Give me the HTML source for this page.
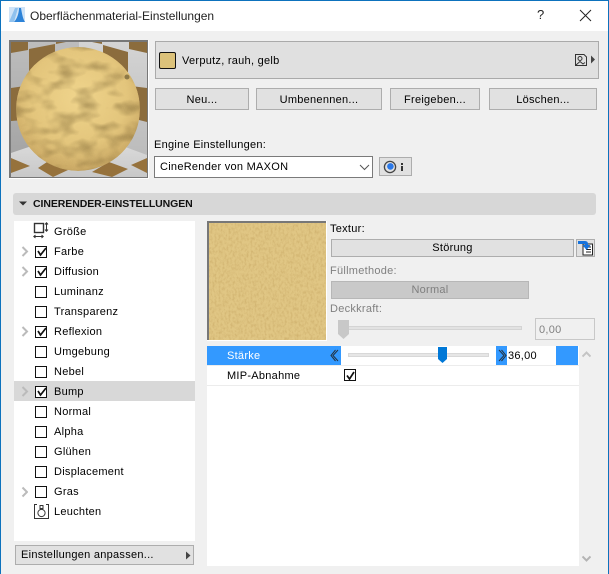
<!DOCTYPE html>
<html lang="de"><head><meta charset="utf-8"><title>Oberflächenmaterial-Einstellungen</title>
<style>
html,body{margin:0;padding:0;background:#f0f0f0}
#w{position:relative;width:609px;height:574px;overflow:hidden;background:#f0f0f0;font-family:"Liberation Sans",sans-serif;font-size:11px;color:#000;letter-spacing:.27px}
#w div,#w svg{position:absolute;box-sizing:border-box}
.t{white-space:nowrap;line-height:14px;margin-top:1px}
.b{background:#e1e1e1;border:1px solid #adadad;text-align:center;white-space:nowrap;line-height:22px}
.c{width:12px;height:12px;border:1px solid #111;background:#fff;margin-top:1px}
</style></head><body><div id="w">
<div style="left:0;top:0;width:609px;height:31px;background:#fff"></div>
<div style="left:0;top:0;width:609px;height:1px;background:#0d72bd"></div>
<div style="left:0;top:0;width:1px;height:574px;background:#0d72bd"></div>
<div style="left:608px;top:0;width:1px;height:574px;background:#0d72bd"></div>
<svg style="left:9px;top:7px" width="17" height="16" viewBox="0 0 17 16"><rect width="16" height="15" fill="#cfe3f7"/><path d="M0 15 L6 1 H9 L5 15Z" fill="#8fc1ee"/><path d="M5 15 C8 12 10 6 10 1 H12 C13 7 14 12 16 15Z" fill="#2d83d8"/></svg>
<div class="t" style="left:30px;top:8px;font-size:12px;letter-spacing:0;color:#222">Oberflächenmaterial-Einstellungen</div>
<div class="t" style="left:537px;top:7px;font-size:13px;color:#222">?</div>
<svg style="left:579px;top:9px" width="13" height="13"><path d="M1 1 L12 12 M12 1 L1 12" stroke="#222" stroke-width="1" fill="none"/></svg>

<svg style="left:9px;top:40px" width="140" height="139" viewBox="0 0 140 139">
<defs>
<filter id="n" x="0" y="0" width="100%" height="100%" color-interpolation-filters="sRGB"><feTurbulence type="fractalNoise" baseFrequency=".045 .095" numOctaves="3" seed="12"/><feGaussianBlur stdDeviation="1.2"/><feColorMatrix values="0 0 0 0 .48  0 0 0 0 .39  0 0 0 0 .2  0 2.6 0 0 -1.15"/></filter>
<filter id="g" x="0" y="0" width="100%" height="100%" color-interpolation-filters="sRGB"><feTurbulence type="fractalNoise" baseFrequency=".9" numOctaves="2" seed="3"/><feColorMatrix values="0 0 0 0 1  0 0 0 0 .88  0 0 0 0 .55  .8 0 0 0 -.3"/></filter>
<radialGradient id="sp" cx=".5" cy=".4" r=".66"><stop offset="0" stop-color="#efd48c"/><stop offset=".6" stop-color="#e3c57c"/><stop offset=".88" stop-color="#cbaa66"/><stop offset="1" stop-color="#a68b56"/></radialGradient>
<linearGradient id="lw" x1="0" y1="0" x2="0" y2="1"><stop offset="0" stop-color="#bdbdbd"/><stop offset="1" stop-color="#a3a3a3"/></linearGradient>
<linearGradient id="rw" x1="0" y1="0" x2="0" y2="1"><stop offset="0" stop-color="#d4d4d4"/><stop offset="1" stop-color="#bababa"/></linearGradient>
<linearGradient id="fl" x1="0" y1="0" x2="0" y2="1"><stop offset="0" stop-color="#e2e2e2"/><stop offset="1" stop-color="#c8c8c8"/></linearGradient>
<clipPath id="cp"><circle cx="69" cy="69" r="62"/></clipPath>
</defs>
<rect width="140" height="139" fill="#fff"/>
<rect x="0" y="0" width="139" height="138" fill="#777"/>
<rect x="2" y="2" width="68" height="120" fill="url(#lw)"/>
<rect x="70" y="2" width="68" height="120" fill="url(#rw)"/>
<path d="M2 113 L70 90 L138 115 V137 H2Z" fill="url(#fl)"/>
<path d="M2 2H19V10L2 13ZM20 9L46 4V30L20 36ZM47 2H57L47 4ZM83 2H93V4ZM94 5L119 12V32L94 30ZM120 2H138V13L120 9ZM2 48L16 46V80L2 81ZM122 46L138 48V82L122 78Z" fill="#8b6c3d"/>
<path d="M2 118L21 126L2 133ZM29 128L44 118L59 130L44 137ZM83 132L100 122L119 129L103 137ZM122 125L138 118V133Z" fill="#96723c"/>
<g clip-path="url(#cp)"><circle cx="69" cy="69" r="62" fill="url(#sp)"/>
<rect x="5" y="5" width="128" height="128" filter="url(#n)" opacity=".5"/>
<rect x="5" y="5" width="128" height="128" filter="url(#g)" opacity=".2"/>
<circle cx="118" cy="37" r="2.5" fill="#5a4d2a" opacity=".6"/></g>
</svg>

<div style="left:155px;top:41px;width:444px;height:38px;background:#e0e0e0;border:1px solid #aaa"></div>
<div style="left:159px;top:52px;width:17px;height:17px;background:#dcc27a;border:1px solid #111;border-radius:2px"></div>
<div class="t" style="left:182px;top:53px">Verputz, rauh, gelb</div>
<svg style="left:574px;top:53px" width="22" height="14" viewBox="0 0 22 14"><path d="M1.5 1.5H10L12.5 4V12.5H1.5Z" fill="none" stroke="#333"/><circle cx="6" cy="5.5" r="2" fill="none" stroke="#333"/><path d="M2 12L6 8.5L9 11L11 9.5" fill="none" stroke="#333"/><path d="M17 2.5L21 6.5L17 10.5Z" fill="#444"/></svg>

<div class="b" style="left:155px;top:88px;width:94px;height:22px">Neu...</div>
<div class="b" style="left:256px;top:88px;width:126px;height:22px">Umbenennen...</div>
<div class="b" style="left:390px;top:88px;width:90px;height:22px">Freigeben...</div>
<div class="b" style="left:489px;top:88px;width:108px;height:22px">Löschen...</div>

<div class="t" style="left:154px;top:137px">Engine Einstellungen:</div>
<div style="left:154px;top:156px;width:219px;height:22px;background:#fff;border:1px solid #7a7a7a"></div>
<div class="t" style="left:160px;top:159px">CineRender von MAXON</div>
<svg style="left:359px;top:164px" width="11" height="7"><path d="M1 1L5.5 5.5L10 1" fill="none" stroke="#555"/></svg>
<div style="left:379px;top:157px;width:33px;height:19px;background:#e1e1e1;border:1px solid #adadad"></div>
<svg style="left:383px;top:160px" width="26" height="14"><circle cx="7" cy="7" r="5.6" fill="none" stroke="#444" stroke-width="1.3"/><circle cx="7.4" cy="6.4" r="3.3" fill="#2a78e8"/><rect x="18" y="6" width="2" height="5" fill="#333"/><rect x="18" y="3" width="2" height="2" fill="#333"/></svg>

<div style="left:13px;top:193px;width:583px;height:22px;background:#d7d7d7;border-radius:3px"></div>
<svg style="left:18px;top:200px" width="10" height="7"><path d="M1 1.5H9L5 5.5Z" fill="#333"/></svg>
<div class="t" style="left:33px;top:196px;font-weight:bold;font-size:10.5px;letter-spacing:-.08px;color:#111">CINERENDER-EINSTELLUNGEN</div>

<div style="left:14px;top:221px;width:181px;height:320px;background:#fff"></div>
<div style="left:14px;top:381px;width:181px;height:20px;background:#d8d8d8"></div>
<div style="left:198px;top:221px;width:400px;height:345px;background:#f0f0f0"></div>

<svg style="left:33px;top:222px" width="16" height="18" viewBox="0 0 16 18"><rect x="1.5" y="1.5" width="9" height="9" fill="none" stroke="#333" stroke-width="1.4"/><path d="M13.5 1V9M12 2.5L13.5 .8L15 2.5M12 7.5L13.5 9.2L15 7.5M1 14.5H10M2.5 13L.8 14.5L2.5 16M8.5 13L10.2 14.5L8.5 16" fill="none" stroke="#333"/></svg>
<div class="t" style="left:54px;top:224px">Größe</div>

<div class="c" style="left:35px;top:245px"></div><div class="c" style="left:35px;top:265px"></div><div class="c" style="left:35px;top:285px"></div><div class="c" style="left:35px;top:305px"></div><div class="c" style="left:35px;top:325px"></div><div class="c" style="left:35px;top:345px"></div><div class="c" style="left:35px;top:365px"></div><div class="c" style="left:35px;top:385px"></div><div class="c" style="left:35px;top:405px"></div><div class="c" style="left:35px;top:425px"></div><div class="c" style="left:35px;top:445px"></div><div class="c" style="left:35px;top:465px"></div><div class="c" style="left:35px;top:485px"></div>

<svg style="left:20px;top:222px" width="30" height="200" viewBox="0 0 30 200">
<g fill="none" stroke="#bbb" stroke-width="2"><path d="M2.5 25L7 29.5L2.5 34M2.5 45L7 49.5L2.5 54M2.5 105L7 109.5L2.5 114M2.5 165L7 169.5L2.5 174"/></g>
<g fill="none" stroke="#111" stroke-width="1.7"><path d="M18 29L20.5 33L26 26M18 49L20.5 53L26 46M18 109L20.5 113L26 106M18 169L20.5 173L26 166"/></g>
</svg>
<svg style="left:20px;top:486px" width="8" height="12"><path d="M2.5 1.5L7 6L2.5 10.5" fill="none" stroke="#bbb" stroke-width="2"/></svg>

<div class="t" style="left:54px;top:244px">Farbe</div>
<div class="t" style="left:54px;top:264px">Diffusion</div>
<div class="t" style="left:54px;top:284px">Luminanz</div>
<div class="t" style="left:54px;top:304px">Transparenz</div>
<div class="t" style="left:54px;top:324px">Reflexion</div>
<div class="t" style="left:54px;top:344px">Umgebung</div>
<div class="t" style="left:54px;top:364px">Nebel</div>
<div class="t" style="left:54px;top:384px">Bump</div>
<div class="t" style="left:54px;top:404px">Normal</div>
<div class="t" style="left:54px;top:424px">Alpha</div>
<div class="t" style="left:54px;top:444px">Glühen</div>
<div class="t" style="left:54px;top:464px">Displacement</div>
<div class="t" style="left:54px;top:484px">Gras</div>
<div class="t" style="left:54px;top:504px">Leuchten</div>
<svg style="left:34px;top:504px" width="15" height="15" viewBox="0 0 15 15"><path d="M3 .5H.5V14.5H14.5V.5H12" fill="none" stroke="#333"/><circle cx="7.5" cy="9" r="3.6" fill="none" stroke="#333"/><rect x="6" y="1.5" width="3" height="3" fill="none" stroke="#333"/></svg>

<div style="left:15px;top:545px;width:179px;height:20px;background:#e1e1e1;border:1px solid #adadad"></div>
<div class="t" style="left:21px;top:547px">Einstellungen anpassen...</div>
<svg style="left:185px;top:551px" width="7" height="9"><path d="M1 .5L5.5 4.5L1 8.5Z" fill="#444"/></svg>

<svg style="left:207px;top:221px" width="120" height="120" viewBox="0 0 120 120">
<defs><filter id="tx" x="0" y="0" width="100%" height="100%" color-interpolation-filters="sRGB"><feTurbulence type="fractalNoise" baseFrequency=".5 .3" numOctaves="3" seed="5"/><feColorMatrix values="0 0 0 0 .68  0 0 0 0 .53  0 0 0 0 .26  0 2.2 0 0 -.9"/></filter></defs>
<rect width="120" height="120" fill="#fff"/><rect x="0" y="0" width="119" height="119" fill="#777"/>
<rect x="2" y="2" width="117" height="117" fill="#e0c684"/><rect x="2" y="2" width="117" height="117" filter="url(#tx)" opacity=".3"/>
</svg>

<div class="t" style="left:330px;top:221px">Textur:</div>
<div class="b" style="left:331px;top:239px;width:243px;height:18px;line-height:17px">Störung</div>
<svg style="left:576px;top:239px" width="19" height="18" viewBox="0 0 19 18"><rect x=".5" y=".5" width="18" height="17" fill="#e1e1e1" stroke="#adadad"/><path d="M7 5H16.5V16H7Z" fill="#fff" stroke="#222"/><path d="M10 8H15M10 10.5H15M10 13H15" stroke="#222"/><path d="M2 2H9Q12 2 12 5V6H14.5L10.5 11L6.5 6H9V5H2Z" fill="#1673dd"/></svg>

<div class="t" style="left:330px;top:263px;color:#808080">Füllmethode:</div>
<div class="b" style="left:331px;top:281px;width:198px;height:18px;line-height:17px;background:#c9c9c9;border-color:#b7b7b7;color:#7f7f7f">Normal</div>
<div class="t" style="left:330px;top:301px;color:#808080">Deckkraft:</div>
<div style="left:345px;top:326px;width:177px;height:4px;background:#e2e2e2;border:1px solid #d4d4d4"></div>
<svg style="left:338px;top:320px" width="11" height="19"><path d="M0 0H11V14L5.5 19L0 14Z" fill="#c8c8c8"/></svg>
<div style="left:535px;top:318px;width:60px;height:22px;border:1px solid #c8c8c8;background:#f0f0f0"></div>
<div class="t" style="left:539px;top:322px;color:#808080">0,00</div>

<div style="left:207px;top:346px;width:372px;height:220px;background:#fff"></div>
<div style="left:207px;top:346px;width:134px;height:19px;background:#3399ff"></div>
<div class="t" style="left:227px;top:348px;color:#fff">Stärke</div>
<svg style="left:330px;top:349px" width="10" height="13"><path d="M8 1L3 6.5L8 12M5.5 1L1 6.5L5.5 12" fill="none" stroke="#234" stroke-width="1"/></svg>
<div style="left:348px;top:353px;width:141px;height:4px;background:#e6e6e6;border:1px solid #d8d8d8"></div>
<svg style="left:438px;top:347px" width="9" height="16"><path d="M0 0H9V12L4.5 16L0 12Z" fill="#0078d7"/></svg>
<div style="left:496px;top:346px;width:11px;height:19px;background:#3399ff"></div>
<svg style="left:497px;top:349px" width="10" height="13"><path d="M2 1L7 6.5L2 12M4.5 1L9 6.5L4.5 12" fill="none" stroke="#234" stroke-width="1"/></svg>
<div class="t" style="left:508px;top:348px">36,00</div>
<div style="left:556px;top:346px;width:22px;height:19px;background:#3399ff"></div>
<div style="left:207px;top:365px;width:372px;height:1px;background:#ececec"></div>
<div class="t" style="left:227px;top:368px">MIP-Abnahme</div>
<div class="c" style="left:344px;top:368px"></div>
<svg style="left:344px;top:369px" width="13" height="13"><path d="M3 6.5L5.5 10L10 3" fill="none" stroke="#111" stroke-width="1.7"/></svg>
<div style="left:207px;top:385px;width:372px;height:1px;background:#ececec"></div>
<svg style="left:582px;top:351px" width="9" height="7"><path d="M0.5 5.5L4.5 1.5L8.5 5.5" fill="none" stroke="#c4c4c4" stroke-width="2"/></svg>
<svg style="left:582px;top:555px" width="9" height="7"><path d="M0.5 1.5L4.5 5.5L8.5 1.5" fill="none" stroke="#b4b4b4" stroke-width="2"/></svg>
</div></body></html>
